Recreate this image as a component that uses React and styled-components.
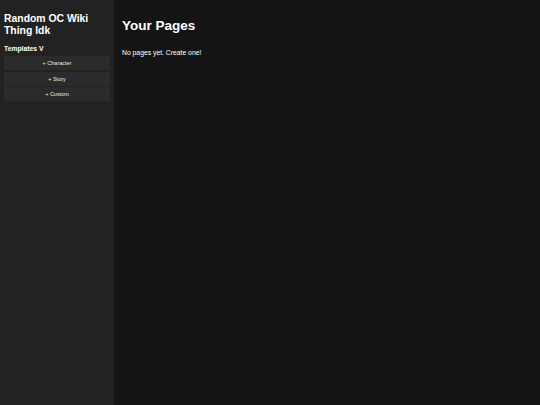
import React from "react";
import styled, { createGlobalStyle } from "styled-components";

const GlobalStyle = createGlobalStyle`
  html, body {
    margin: 0;
    padding: 0;
    height: 100%;
    background: #141414;
  }
  #root {
    height: 100%;
  }
`;

const Layout = styled.div`
  display: flex;
  height: 405px;
  font-family: "Liberation Sans", Arial, sans-serif;
  color: #ffffff;
`;

const Sidebar = styled.aside`
  width: 114px;
  flex-shrink: 0;
  background: #222222;
  padding: 13px 4px;
  box-sizing: border-box;
  display: flex;
  flex-direction: column;
`;

const SiteTitle = styled.h1`
  margin: 0;
  font-size: 10.4px;
  line-height: 12px;
  font-weight: bold;
`;

const SectionTitle = styled.h2`
  margin: 7px 0 3px;
  font-size: 6.8px;
  line-height: 9px;
  font-weight: bold;
`;

const TemplateList = styled.div`
  display: flex;
  flex-direction: column;
  gap: 1.5px;
`;

const TemplateButton = styled.button`
  height: 14px;
  border: none;
  background: #2b2b2b;
  color: #e8e8e8;
  font-family: inherit;
  font-size: 5.5px;
  padding: 0;
  cursor: pointer;
`;

const Main = styled.main`
  flex: 1;
  background: #141414;
  padding: 18px 8px;
`;

const PageTitle = styled.h1`
  margin: 0;
  font-size: 13.5px;
  line-height: 16px;
  font-weight: bold;
`;

const EmptyText = styled.p`
  margin: 14px 0 0;
  font-size: 6.8px;
  line-height: 9px;
`;

const templates = ["Character", "Story", "Custom"];

export default function App() {
  return (
    <>
      <GlobalStyle />
      <Layout>
        <Sidebar>
          <SiteTitle>Random OC Wiki Thing Idk</SiteTitle>
          <SectionTitle>Templates V</SectionTitle>
          <TemplateList>
            {templates.map((t) => (
              <TemplateButton key={t}>+ {t}</TemplateButton>
            ))}
          </TemplateList>
        </Sidebar>
        <Main>
          <PageTitle>Your Pages</PageTitle>
          <EmptyText>No pages yet. Create one!</EmptyText>
        </Main>
      </Layout>
    </>
  );
}
